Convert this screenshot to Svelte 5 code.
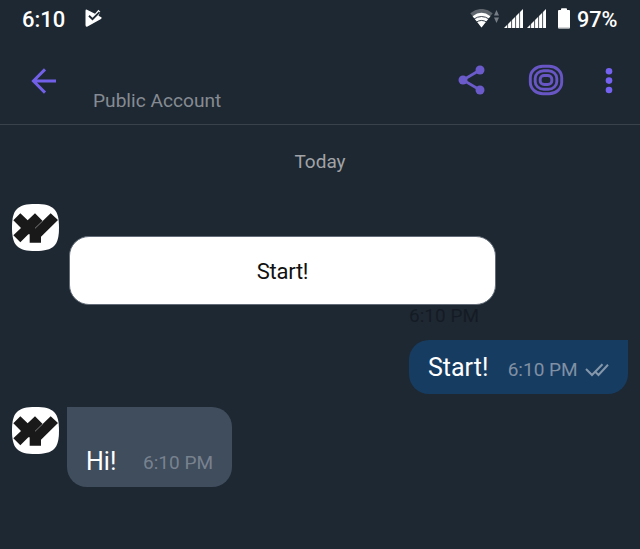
<script>
  const time = '6:10 PM';
  const bars = [0, 4, 8, 12, 16];
</script>

{#snippet signal()}
  <svg class="signal" width="20" height="20" viewBox="0 0 20 20">
    <path d="M0 20L19 1V20Z" fill="#fff" />
    {#each bars as x}
      <path d="M{x - 0.4} 0V20" stroke="#1e2832" stroke-width=".8" />
    {/each}
  </svg>
{/snippet}

{#snippet avatar()}
  <svg class="avatar" width="47" height="47" viewBox="37 43 141 141">
    <path d="M107.500 43C162 43 178 59 178 113.500S162 184 107.500 184S37 168 37 113.500S53 43 107.500 43Z" fill="#fff" />
    <path d="M62 71L84 92L106 71L129 94L153 71L175 91L124 141V159H90V134L86 134L62 158L41 137L64 115L41 92Z" fill="#191919" />
    <path d="M106 116L130 93" stroke="#ddd" stroke-width="1.500" />
  </svg>
{/snippet}

<main>
  <div class="status">
    <span class="clock">6:10</span>
    <svg class="app" width="18" height="19" viewBox="0 0 18 19">
      <path d="M2 .7L10 4.800L13.500 .8L15.300 2.800L13.500 6.700L16.300 8.200Q17.300 9 16 10L2.500 17.500Q.5 18.300 .5 16V2Q.5 0 2 .7Z" fill="#fff" />
      <path d="M4 6.800L7.500 10.200L14.500 3.200" fill="none" stroke="#1e2832" stroke-width="1.900" />
    </svg>
    <svg class="wifi" width="30" height="20" viewBox="0 0 30 20">
      <path d="M.3 4.300Q11.500-4.500 22.700 4.300L11.500 18.500Z" fill="#5f666d" />
      <path d="M2.600 7.200Q11.500 .5 20.400 7.200L11.500 18.500Z" fill="#fff" />
      <path d="M3.500 10.300Q11.500 4.700 19.500 10.300M6 13.300Q11.500 9.600 17 13.300" fill="none" stroke="#1e2832" stroke-width=".9" />
      <path d="M24 6.500L26.500 1L29 6.500ZM24 8.500H29L26.500 14Z" fill="#777d84" />
    </svg>
    {@render signal()}
    {@render signal()}
    <svg class="battery" width="12" height="21" viewBox="0 0 12 21">
      <path d="M3 2V1Q3 .3 4 .3H8Q9 .3 9 1V2H11Q12 2 12 3V19Q12 20.500 11 20.500H1Q0 20.500 0 19V3Q0 2 1 2Z" fill="#fff" />
      <path d="M.5 20H11.500" stroke="#a6aaae" />
    </svg>
    <span class="percent">97%</span>
  </div>

  <header>
    <svg class="back" width="26" height="26" viewBox="0 0 26 26" fill="none" stroke="#7360e8" stroke-width="2.900">
      <path d="M25 13H2.500M14 1.400L2.400 13L14 24.600" />
    </svg>
    <span class="subtitle">Public Account</span>
    <svg class="share" width="28" height="30" viewBox="0 0 28 30" fill="#6b5ac9">
      <path d="M22 5L5 15L22 25" fill="none" stroke="#6b5ac9" stroke-width="2.700" />
      <circle cx="22" cy="5" r="4.500" /><circle cx="5" cy="15" r="4.500" /><circle cx="22" cy="25" r="4.500" />
    </svg>
    <svg class="rings" width="36" height="32" viewBox="0 0 36 32" fill="none" stroke="#6756c3" stroke-width="2.900">
      <rect x="2.300" y="2.300" width="31.400" height="27.400" rx="12.500" ry="11.500" />
      <rect x="7.200" y="6.800" width="21.600" height="18.400" rx="8.500" ry="7.500" />
      <rect x="12.200" y="11.500" width="11.600" height="9" rx="4" ry="3.500" />
    </svg>
    <svg class="more" width="8" height="28" viewBox="0 0 8 28" fill="#7562f0">
      <circle cx="4" cy="4.300" r="3.300" /><circle cx="4" cy="13.600" r="3.300" /><circle cx="4" cy="23" r="3.300" />
    </svg>
  </header>

  <div class="date">Today</div>

  <div class="row first">
    {@render avatar()}
    <div class="card">
      <button>Start!</button>
      <span class="time dark">{time}</span>
    </div>
  </div>

  <div class="bubble sent">
    <span class="message">Start!</span>
    <span class="time">{time}</span>
    <svg class="checks" width="24" height="14" viewBox="0 0 24 14" fill="none" stroke="#8497ab" stroke-width="2">
      <path d="M1 6L7 12L17.500 1.300M10.500 9L13.500 12L23 1.800" />
    </svg>
  </div>

  <div class="row last">
    {@render avatar()}
    <div class="bubble received">
      <span class="message">Hi!</span>
      <span class="time">{time}</span>
    </div>
  </div>
</main>

<style>
  :global(body) { margin: 0; background: #1e2832; }
  main { width: 640px; height: 549px; overflow: hidden; background: #1e2832; color: #fff; font-family: Roboto, sans-serif; white-space: nowrap; }
  svg { display: block; flex: none; }
  .status { height: 38px; display: flex; align-items: flex-start; }
  .clock { width: 62px; margin-left: 22px; padding-top: 7px; font-size: 22px; line-height: 26px; font-weight: 500; }
  .app { margin: 9px 0 0 1px; }
  .wifi { margin: 9px 4px 0 auto; }
  .signal { margin: 8px 3px 0 0; }
  .battery { margin: 8px 8px 0 8px; }
  .percent { width: 63px; padding-top: 7px; font-size: 21.6px; line-height: 26px; font-weight: 500; }
  .battery + .percent { margin-left: -1px; }
  header { height: 86px; border-bottom: 1px solid #39414b; display: flex; align-items: flex-start; }
  .back { margin: 30px 0 0 31px; }
  .subtitle { margin: 51px 0 0 36px; color: #868b92; font-size: 19.15px; line-height: 24px; }
  .share { margin: 27px 0 0 auto; }
  .rings { margin: 26px 0 0 42px; }
  .more { margin: 29px 27px 0 41px; }
  .date { height: 79px; padding-top: 25px; box-sizing: border-box; text-align: center; color: #a0a3a7; font-size: 19px; line-height: 24px; }
  .row { display: flex; align-items: flex-start; padding-left: 12px; }
  .first { height: 136px; }
  .card { width: 427px; margin: 32px 0 0 10px; display: flex; flex-direction: column; align-items: flex-end; }
  button { width: 100%; height: 69px; padding: 2px 0 0; border: 1px solid #626b77; border-radius: 20px; background: #fff; color: #111; font-family: inherit; font-size: 22px; line-height: 28px; letter-spacing: -.25px; }
  .time { font-size: 19px; line-height: 24px; color: #8090a4; }
  .dark { margin-right: 17px; margin-top: -1px; color: #151b24; }
  .bubble { display: flex; box-sizing: border-box; }
  .sent { width: 219px; height: 54px; margin-left: 409px; padding: 0 19px; align-items: center; justify-content: space-between; border-radius: 20px 0 20px 20px; background: #173c61; }
  .message { font-size: 25px; line-height: 30px; }
  .sent .message { padding-top: 2px; }
  .sent .time { padding-top: 5px; margin-left: 12px; }
  .checks { margin-top: 5px; }
  .last { margin-top: 13px; }
  .received { width: 165px; height: 80px; margin-left: 8px; padding: 0 19px 11px; align-items: flex-end; justify-content: space-between; border-radius: 0 20px 20px 20px; background: #404d5d; }
  .received .message { margin-bottom: -1px; }
  .received .time { padding-bottom: 1px; color: #78828f; }
</style>
